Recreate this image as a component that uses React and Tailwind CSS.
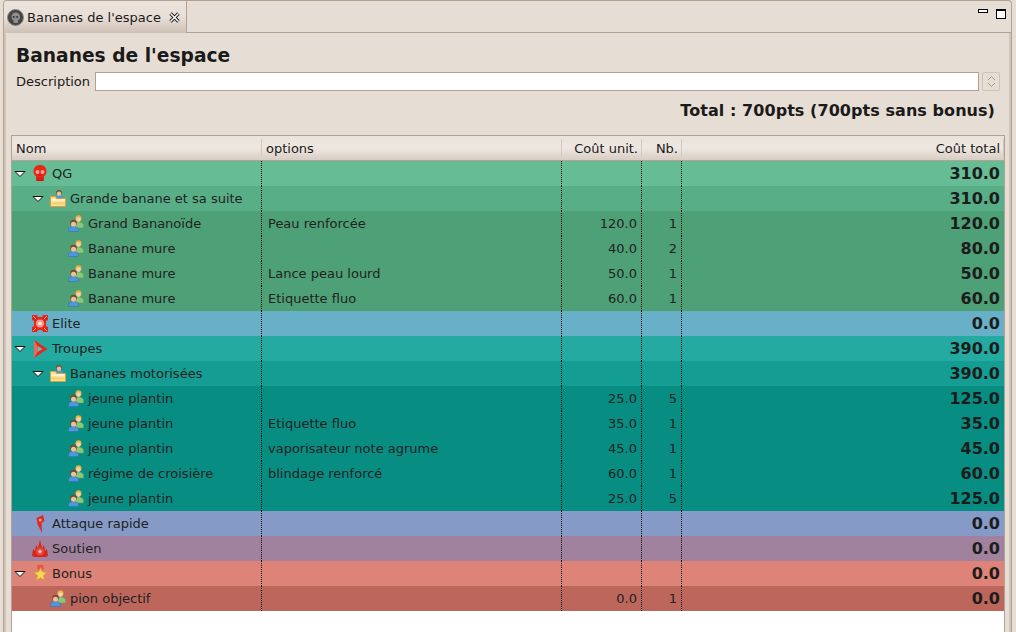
import React from 'react';

const Twisty = () => (
  <svg width="12" height="8" viewBox="0 0 12 8" className="shrink-0">
    <path d="M1 1.500h10L6 6.500z" fill="#fff" stroke="#111" strokeWidth="1" />
  </svg>
);

const People = () => (
  <svg width="16" height="17" viewBox="0 0 16 17" className="shrink-0">
    <path d="M7 13v-3c0-2 1.500-3 3.500-3s5 1 5 3v3z" fill="#8cc977" stroke="#5d9a50" strokeWidth="0.5" />
    <circle cx="10.500" cy="3.300" r="3" fill="#e9b23e" />
    <circle cx="10.500" cy="4.600" r="2.300" fill="#f4d3ae" />
    <path d="M.5 16.500v-2c0-2 2-3 5-3s5 1 5 3v2z" fill="#4f97dc" stroke="#2f6cae" strokeWidth="0.5" />
    <circle cx="5.500" cy="8" r="3.200" fill="#7a4a2c" />
    <circle cx="5.500" cy="9.200" r="2.500" fill="#efc09c" />
  </svg>
);

const FolderPerson = () => (
  <svg width="16" height="17" viewBox="0 0 16 17" className="shrink-0">
    <path d="M4.500 10V8c0-1.500 2-2.500 4.500-2.500s4.500 1 4.500 2.500v2z" fill="#4f97dc" />
    <circle cx="9" cy="2.800" r="2.800" fill="#7a4a2c" />
    <circle cx="9" cy="3.800" r="2.200" fill="#efc09c" />
    <path d="M.5 6.500h5l1 2h9v8H.5z" fill="#f7e29a" stroke="#dd9c3c" strokeWidth="1" />
    <path d="M1.500 10h13" stroke="#fff8d8" strokeWidth="1.500" />
    <path d="M1.500 13.500h13" stroke="#efcf72" strokeWidth="2" />
  </svg>
);

const Skull = () => (
  <svg width="14" height="17" viewBox="0 0 14 17" className="shrink-0">
    <path d="M7 0c3.900 0 6.500 2.500 6.500 6.200 0 2.500-1 4-2.500 5V16H3v-4.800C1.500 10.200.5 8.700.5 6.200.5 2.500 3.100 0 7 0z" fill="#e8261a" />
    <circle cx="4.500" cy="7" r="2" fill="#f59a8c" />
    <circle cx="9.500" cy="7" r="2" fill="#f59a8c" />
    <path d="M7 9l1 2H6z" fill="#b5160c" />
    <path d="M5 13v3M7 13v3M9 13v3" stroke="#a81208" strokeWidth="0.8" />
  </svg>
);

const EliteIcon = () => (
  <svg width="16" height="17" viewBox="0 0 16 17" className="shrink-0">
    <path d="M0 0h5l1 2h4l1-2h5v5l-2 1v5l2 1v5h-5l-1-2H6l-1 2H0v-5l2-1V6L0 5z" fill="#e5281c" />
    <circle cx="8" cy="8.500" r="4" fill="#f79a8c" />
    <circle cx="8" cy="8.500" r="1.800" fill="#fde4de" />
    <path d="M1 1l3 3M15 1l-3 3M1 16l3-3M15 16l-3-3" stroke="#fff" strokeWidth="0.8" opacity="0.7" />
  </svg>
);

const TroupesIcon = () => (
  <svg width="15" height="18" viewBox="0 0 15 18" className="shrink-0">
    <path d="M1 0l13.500 9L1 18z" fill="#e5281c" />
    <path d="M4.500 6l5 3-5 3z" fill="#5fc4bc" />
    <path d="M1 0l3.500 6v6L1 18" fill="#f0685c" />
  </svg>
);

const AttaqueIcon = () => (
  <svg width="11" height="18" viewBox="0 0 11 18" className="shrink-0">
    <path d="M1.500 3L8 0l1.500 6-3 2 .5 10L2.500 9z" fill="#dd2a22" />
    <circle cx="5.200" cy="5" r="1.500" fill="#f9a090" />
  </svg>
);

const SoutienIcon = () => (
  <svg width="16" height="17" viewBox="0 0 16 17" className="shrink-0">
    <path d="M0 16l1-7 2 2 1-6 2 3 2-8 2 8 2-3 1 6 2-2 1 7-3 1H3z" fill="#d6261c" />
    <circle cx="8" cy="11.500" r="4" fill="#e8483c" />
    <circle cx="8" cy="11.500" r="1.700" fill="#f9b8ac" />
  </svg>
);

const BonusIcon = () => (
  <svg width="15" height="17" viewBox="0 0 15 17" className="shrink-0">
    <path d="M4.500 0h6v5h-6z" fill="#e8504a" />
    <path d="M7.500 2.500l1.900 4.400 4.800.4-3.700 3.200 1.100 4.800-4.100-2.500-4.100 2.500 1.100-4.800L.8 7.300l4.800-.4z" fill="#f8d65a" stroke="#d99a2a" strokeWidth="0.8" />
  </svg>
);

const icons = {
  people: People,
  folder: FolderPerson,
  qg: Skull,
  elite: EliteIcon,
  troupes: TroupesIcon,
  attaque: AttaqueIcon,
  soutien: SoutienIcon,
  bonus: BonusIcon,
};

const rows = [
  { bg: 'bg-[#66bd95]', pad: 'pl-[2px]', open: true, icon: 'qg', nom: 'QG', total: '310.0' },
  { bg: 'bg-[#58ae87]', pad: 'pl-[20px]', open: true, icon: 'folder', nom: 'Grande banane et sa suite', total: '310.0' },
  { bg: 'bg-[#4ea077]', pad: 'pl-[56px]', icon: 'people', nom: 'Grand Bananoïde', opt: 'Peau renforcée', unit: '120.0', nb: '1', total: '120.0' },
  { bg: 'bg-[#4ea077]', pad: 'pl-[56px]', icon: 'people', nom: 'Banane mure', unit: '40.0', nb: '2', total: '80.0' },
  { bg: 'bg-[#4ea077]', pad: 'pl-[56px]', icon: 'people', nom: 'Banane mure', opt: 'Lance peau lourd', unit: '50.0', nb: '1', total: '50.0' },
  { bg: 'bg-[#4ea077]', pad: 'pl-[56px]', icon: 'people', nom: 'Banane mure', opt: 'Etiquette fluo', unit: '60.0', nb: '1', total: '60.0' },
  { bg: 'bg-[#68afc8]', pad: 'pl-[20px]', icon: 'elite', nom: 'Elite', total: '0.0' },
  { bg: 'bg-[#24aaa0]', pad: 'pl-[2px]', open: true, icon: 'troupes', nom: 'Troupes', total: '390.0' },
  { bg: 'bg-[#149d92]', pad: 'pl-[20px]', open: true, icon: 'folder', nom: 'Bananes motorisées', total: '390.0' },
  { bg: 'bg-[#078d82]', pad: 'pl-[56px]', icon: 'people', nom: 'jeune plantin', unit: '25.0', nb: '5', total: '125.0' },
  { bg: 'bg-[#078d82]', pad: 'pl-[56px]', icon: 'people', nom: 'jeune plantin', opt: 'Etiquette fluo', unit: '35.0', nb: '1', total: '35.0' },
  { bg: 'bg-[#078d82]', pad: 'pl-[56px]', icon: 'people', nom: 'jeune plantin', opt: 'vaporisateur note agrume', unit: '45.0', nb: '1', total: '45.0' },
  { bg: 'bg-[#078d82]', pad: 'pl-[56px]', icon: 'people', nom: 'régime de croisière', opt: 'blindage renforcé', unit: '60.0', nb: '1', total: '60.0' },
  { bg: 'bg-[#078d82]', pad: 'pl-[56px]', icon: 'people', nom: 'jeune plantin', unit: '25.0', nb: '5', total: '125.0' },
  { bg: 'bg-[#859ac6]', pad: 'pl-[20px]', icon: 'attaque', nom: 'Attaque rapide', total: '0.0' },
  { bg: 'bg-[#a0829f]', pad: 'pl-[20px]', icon: 'soutien', nom: 'Soutien', total: '0.0' },
  { bg: 'bg-[#de8378]', pad: 'pl-[2px]', open: true, icon: 'bonus', nom: 'Bonus', total: '0.0' },
  { bg: 'bg-[#bd675c]', pad: 'pl-[38px]', icon: 'people', nom: 'pion objectif', unit: '0.0', nb: '1', total: '0.0' },
];

const HeaderCell = ({ children, className = '' }) => (
  <div className={`flex items-center h-[18px] pl-[4px] pr-[3px] border-r border-[#d3c8bd] ${className}`}>{children}</div>
);

const Row = ({ row }) => {
  const Icon = icons[row.icon];
  return (
    <div className={`grid grid-cols-[250px_300px_80px_40px_1fr] h-[25px] items-stretch text-[#222] ${row.bg}`}>
      <div className={`flex items-center border-r border-dotted border-black ${row.pad}`}>
        {row.open && <span className="w-[18px] flex"><Twisty /></span>}
        <span className="w-[16px] flex justify-center mr-[4px]"><Icon /></span>
        <span>{row.nom}</span>
      </div>
      <div className="flex items-center pl-[6px] border-r border-dotted border-black">{row.opt}</div>
      <div className="flex items-center justify-end pr-[4px] border-r border-dotted border-black">{row.unit}</div>
      <div className="flex items-center justify-end pr-[4px] border-r border-dotted border-black">{row.nb}</div>
      <div className="flex items-center justify-end pr-[4px] font-bold text-[16px] text-[#1c1c1c]">{row.total}</div>
    </div>
  );
};

export default function App() {
  return (
    <div className="w-[1016px] h-[632px] overflow-hidden bg-[#e6ddd4] font-['DejaVu_Sans',sans-serif] text-[13px] leading-none text-[#1a1a1a] pl-[3px] pr-[4px]">
      <div className="h-full flex flex-col border-x border-t border-[#b3a292] rounded-t-[4px]">
        {/* tab strip */}
        <div className="flex h-[32px] shrink-0">
          <div className="flex items-center w-[183px] h-[32px] bg-gradient-to-b from-[#ebe3dc] via-[#e8dfd7] to-[#cfc0b5] border-r border-[#b3a292] rounded-tl-[3px] pl-[3px]">
            <svg width="17" height="17" viewBox="0 0 17 17" className="shrink-0">
              <circle cx="8.500" cy="8.500" r="8" fill="#444" stroke="#8a8a8a" />
              <path d="M8.500 3.500c3 0 4.500 2 4.500 4.500 0 1.800-1 3-2 3.500V14H6.500v-2.500c-1-.5-2-1.700-2-3.500 0-2.500 1.500-4.500 4-4.500z" fill="#8d8d8d" />
              <circle cx="6.800" cy="8" r="1" fill="#333" />
              <circle cx="10.200" cy="8" r="1" fill="#333" />
            </svg>
            <span className="ml-[3px] whitespace-nowrap">Bananes de l'espace</span>
            <svg width="11" height="11" viewBox="0 0 11 11" className="ml-[8px] shrink-0">
              <path d="M1.500 1.500l8 8M9.500 1.500l-8 8" stroke="#111" strokeWidth="3.200" />
              <path d="M1.500 1.500l8 8M9.500 1.500l-8 8" stroke="#fff" strokeWidth="1.600" />
            </svg>
          </div>
          <div className="flex-1 flex items-start justify-end border-b border-[#b3a292] pt-[8px] pr-[5px] gap-[8px]">
            <span className="w-[10px] h-[4px] border border-black bg-white" />
            <span className="w-[10px] h-[10px] border border-black border-t-[2px] bg-white" />
          </div>
        </div>

        {/* editor body */}
        <div className="flex-1 min-h-0 flex flex-col border-x-2 border-[#d0c3b8] pl-[5px] pr-[4px]">
          <h1 className="mt-[12px] ml-[5px] h-[21px] text-[18.67px] leading-[22px] font-bold">Bananes de l'espace</h1>
          <div className="flex items-center mt-[5px] ml-[5px] h-[20px]">
            <span className="w-[79px]">Description</span>
            <div className="w-[884px] h-[19px] bg-white border border-[#b3a292]" />
            <div className="ml-[3px] w-[18px] h-[19px] border border-[#cfc4b8] rounded-[2px] flex items-center justify-center">
              <svg width="9" height="13" viewBox="0 0 9 13">
                <path d="M1 5l3.500-3.500L8 5M1 8l3.500 3.500L8 8" fill="none" stroke="#a79a8d" strokeWidth="1" />
              </svg>
            </div>
          </div>
          <div className="mt-[10px] h-[20px] flex justify-end pr-[10px] text-[16px] leading-[20px] font-bold tracking-[0.06px]">Total : 700pts (700pts sans bonus)</div>

          {/* tree table */}
          <div className="mt-[14px] flex-1 min-h-0 flex flex-col bg-white border-x border-t border-[#b3a292]">
            <div className="grid grid-cols-[250px_300px_80px_40px_1fr] items-center h-[25px] shrink-0 bg-gradient-to-b from-[#e9e2db] via-[#eee8e2] to-[#d8ccc3] border-b border-[#b3a292]">
              <HeaderCell>Nom</HeaderCell>
              <HeaderCell>options</HeaderCell>
              <HeaderCell className="justify-end">Coût unit.</HeaderCell>
              <HeaderCell className="justify-end">Nb.</HeaderCell>
              <HeaderCell className="justify-end">Coût total</HeaderCell>
            </div>
            {rows.map((row, i) => (
              <Row key={i} row={row} />
            ))}
          </div>
        </div>
      </div>
    </div>
  );
}
